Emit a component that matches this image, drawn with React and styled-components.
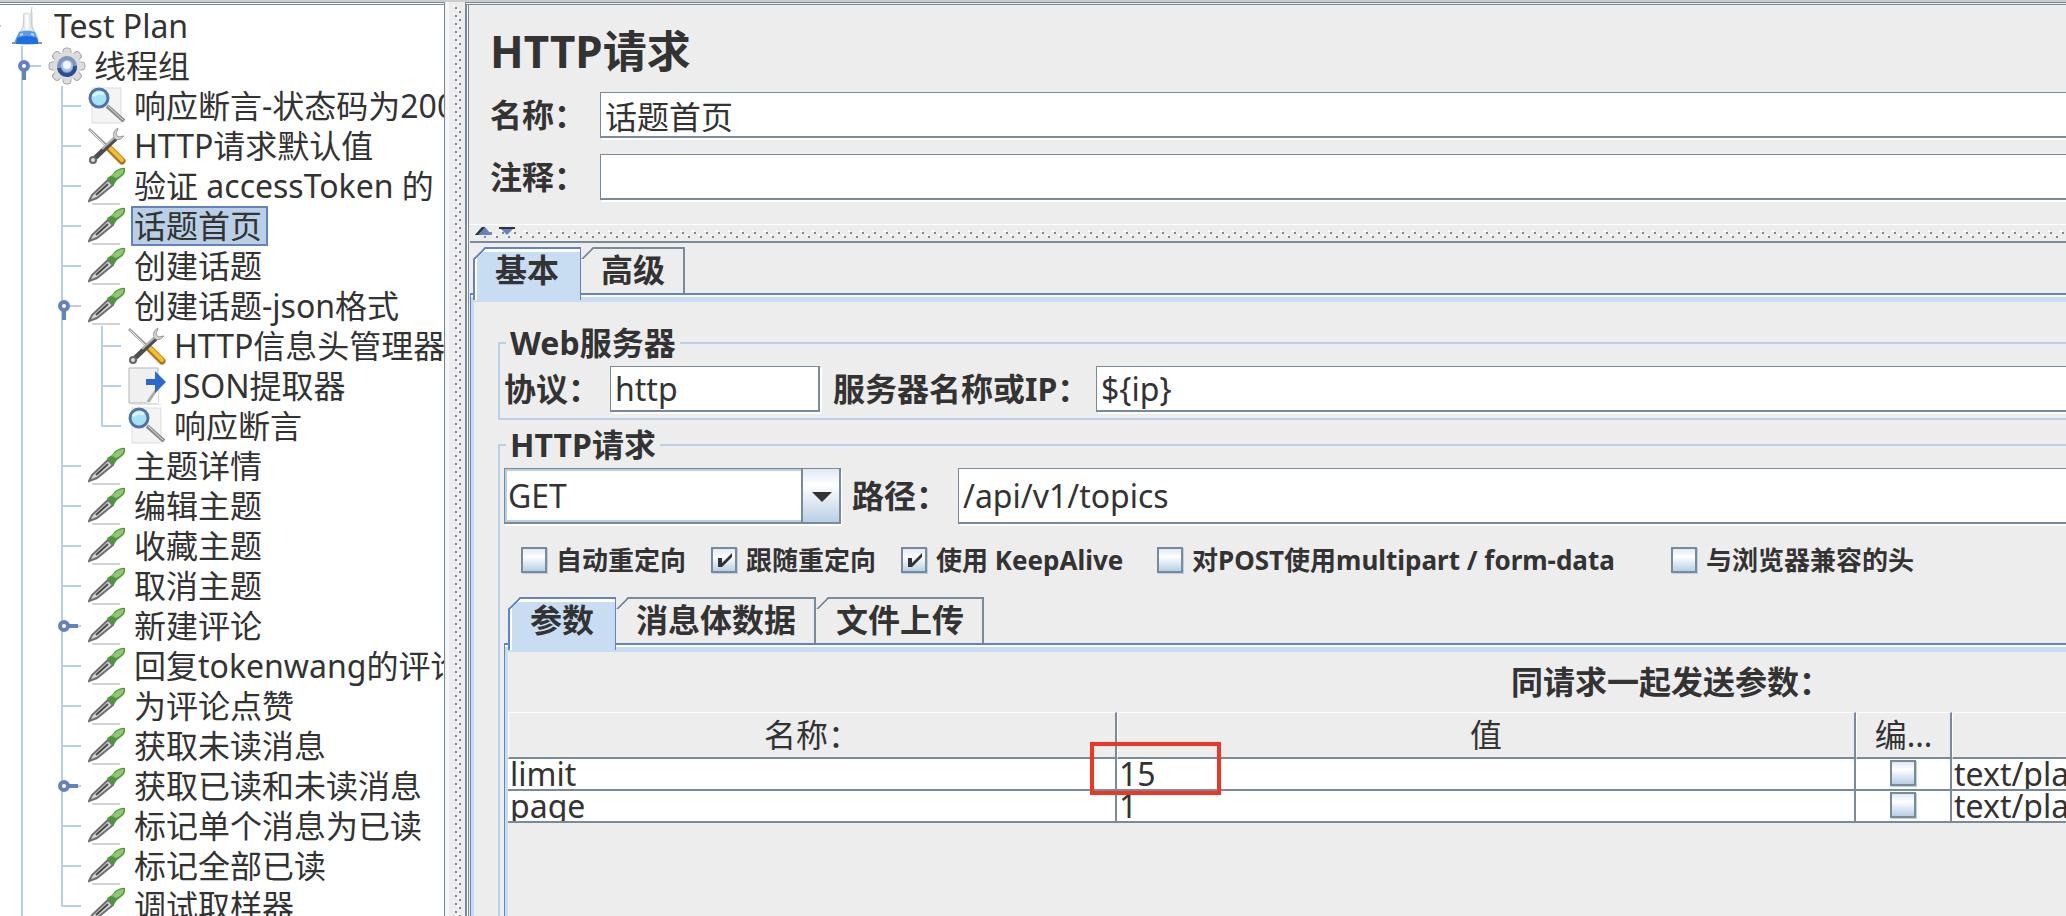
import React, { useState } from 'react'
import styled, { createGlobalStyle } from 'styled-components'

const LINE = '#7a8a99'
const BLUE = '#6382bf'
const PALE = '#b8cfe5'
const TAB = '#c8ddf2'

const GlobalStyle = createGlobalStyle`
* { box-sizing: border-box; }
body {
    margin: 0;
    overflow: hidden;
    background: #ededed;
    color: #333333;
    font: 32px/40px "Noto Sans", "Noto Sans CJK SC", sans-serif;
}
input, select, button { font: inherit; color: inherit; margin: 0; }
input:focus, select:focus { outline: none; }
`

const Window = styled.div`
height: 100vh;
display: grid;
grid-template-columns: 446px 19px minmax(0, 1fr);
border-top: 2px solid #cccccc;
`

const TreePane = styled.nav`
background: #fff;
border-top: 3px double ${LINE};
border-right: 1px solid ${LINE};
margin-right: 1px;
padding-top: 1px;
overflow: hidden;
`

const Splitter = styled.div`
border-left: 3px solid #f7f7f7;
svg { display: block; width: 100%; height: 100%; }
`

const TreeList = styled.ul`
list-style: none;
margin: 0;
padding: 0;
`

const TreeRow = styled.li`
display: flex;
align-items: center;
height: 40px;
padding-left: 2px;
white-space: nowrap;

&:first-child {
    background: linear-gradient(${PALE}, ${PALE}) 0 19px / 1px 2px no-repeat;
}
`

const Guide = styled.svg`
flex: none;
width: 40px;
height: 40px;
`

const NodeIcon = styled.svg`
flex: none;
width: 38px;
height: 38px;
margin: 0 5px 0 6px;
`

const NodeLabel = styled.button`
height: 40px;
padding: 0 4px 0 1px;
border: 2px solid ${props => props.$selected ? BLUE : 'transparent'};
background: ${props => props.$selected ? PALE : 'transparent'};
line-height: 36px;
white-space: nowrap;
`

const Editor = styled.main`
border-left: 2px solid ${LINE};
border-top: 3px double ${LINE};
overflow: hidden;
display: flex;
flex-direction: column;
box-shadow: inset 1px 0 #fff, inset 2px 0 ${LINE};
padding-left: 3px;
`

const Heading = styled.h1`
margin: 18px 0 13px 20px;
font-size: 44px;
line-height: 56px;
`

const Field = styled.div`
display: flex;
align-items: center;
margin: 0 0 16px 20px;
`

const FieldLabel = styled.label`
flex: none;
width: ${props => props.$width}px;
font-weight: bold;
white-space: nowrap;
`

const TextInput = styled.input`
min-width: 0;
padding: 0 4px;
background: #fff;
border: 1px solid ${LINE};
border-bottom-width: 2px;
border-right-width: 2px;
box-shadow: 2px 2px #fff;
flex: ${props => props.$width ? 'none' : '1'};
width: ${props => props.$width ? `${props.$width}px` : 'auto'};
height: ${props => props.$tall ? 56 : 46}px;
margin-right: ${props => props.$width ? 13 : -4}px;
`

const Divider = styled.div`
height: 19px;
margin-top: 8px;
flex: none;
border-top: 1px solid #fff;
border-bottom: 2px solid ${LINE};
svg { display: block; width: 100%; height: 16px; }
`

const TabBar = styled.div`
display: flex;
margin-top: 4px;
padding-left: ${props => props.$inset}px;
`

const TabButton = styled.button`
position: relative;
height: 46px;
padding: 0 ${props => props.$first ? 22 : 20}px;
border: 0;
background: none;
font-weight: bold;
line-height: 38px;
span { position: relative; z-index: 2; }
`

const TabShape = styled.i`
position: absolute;
inset: 0 0 ${props => props.$active ? -7 : 0}px 0;
z-index: ${props => props.$active ? 1 : 0};
border-top: 2px solid ${props => props.$active ? BLUE : LINE};
border-right: ${props => props.$active ? 1 : 2}px solid ${props => props.$active ? BLUE : LINE};
border-left: ${props => props.$active ? `2px solid ${BLUE}` : '0'};
background: ${props => props.$active ? TAB : 'transparent'};
box-shadow: ${props => props.$active ? 'inset 2px 3px #fff' : 'none'};
clip-path: polygon(0 12px, 12px 0, 100% 0, 100% 100%, 0 100%);
&::before {
    content: '';
    position: absolute;
    left: ${props => props.$active ? -2 : 0}px;
    top: -2px;
    width: 12px;
    height: 12px;
    background: linear-gradient(135deg, transparent 49%, ${props => props.$active ? BLUE : LINE} 49% 60%, transparent 60%);
}
`

const TabPanel = styled.section`
flex: 1;
border-left: 1px solid ${BLUE};
border-top: 2px solid ${BLUE};
box-shadow: inset 0 2px #fff, inset 3px 7px ${TAB};
min-height: 0;
padding: ${props => props.$pad};
display: flex;
flex-direction: column;
`

const Group = styled.fieldset`
display: flex;
flex-direction: column;
flex: ${props => props.$grow ? '1' : 'none'};
min-width: 0;
margin: 0 -4px 5px 0;
padding: 3px 0 6px 4px;
border: 2px solid ${PALE};
${props => props.$grow && 'border-bottom: 0; margin-bottom: 0; padding-bottom: 0;'}
`

const Legend = styled.legend`
margin-left: 2px;
padding: 0 4px;
font-weight: bold;
line-height: 40px;
`

const Row = styled.div`
display: flex;
align-items: center;
`

const Combo = styled.div`
display: grid;
flex: none;
width: 337px;
height: 56px;
margin-right: 11px;
border: 1px solid ${LINE};
border-bottom-width: 2px;
border-right-width: 2px;
box-shadow: 1px 2px #fff;
grid-template-columns: 1fr 38px;
select {
    grid-area: 1 / 1 / 2 / 3;
    appearance: none;
    border: 2px solid ${PALE};
    border-radius: 0;
    padding: 0 1px;
    background: #fff;
}
svg { grid-area: 1 / 2; width: 38px; height: 53px; pointer-events: none; z-index: 1; }
`

const Options = styled.div`
display: grid;
grid-template-columns: 190px 190px 256px 514px auto;
padding: 16px 0 13px 17px;
`

const Option = styled.label`
display: flex;
align-items: center;
gap: 9px;
font-size: 26px;
font-weight: bold;
white-space: nowrap;
`

const CheckBox = styled.input`
appearance: none;
display: block;
flex: none;
width: 26px;
height: 26px;
border: 2px solid ${LINE};
box-shadow: 1px 1px ${PALE};
background: linear-gradient(#dfe9f4, #fff 35%, #b8cfe5);
&:checked {
    background: url("data:image/svg+xml,%3Csvg xmlns='http://www.w3.org/2000/svg' viewBox='0 0 22 22'%3E%3Cpath d='M5 9h4v5L19 4v4L9 18H5z' fill='%23333'/%3E%3C/svg%3E"), linear-gradient(#dfe9f4, #fff 35%, #b8cfe5);
}
`

const TableArea = styled.div`
position: relative;
overflow: hidden;
flex: 1;
`

const ParamTable = styled.table`
width: 2326px;
table-layout: fixed;
border-collapse: separate;
border-spacing: 0;
caption { height: 60px; line-height: 60px; font-weight: bold; }
th {
    height: 47px;
    padding: 0;
    font-weight: normal;
    line-height: 44px;
    border-top: 1px solid #fff;
    border-left: 1px solid #fff;
    border-right: 2px solid ${LINE};
    border-bottom: 2px solid ${LINE};
}
td {
    height: 32px;
    padding: 0 2px;
    background: #fff;
    border-right: 2px solid ${LINE};
    border-bottom: 2px solid ${LINE};
}
`

const Cell = styled.div`
height: 30px;
line-height: 30px;
overflow: hidden;
input { margin: 1px auto; }
`

const Highlight = styled.div`
position: absolute;
left: 582px;
top: 90px;
width: 131px;
height: 53px;
border: 4px solid #ee3626;
pointer-events: none;
`

const icons = {
    plan: <>
        <path d="M17 5l6 1V1l2 5v14l7 14H6l9-14z" fill="#e6e9ec" />
        <path d="M16 6l-1 14L8 32M24 0l-1 8 1 12 6 12" stroke="#c3c7cb" />
        <path d="M19 8v18" stroke="#fff" strokeWidth="3" />
        <path d="M11 25q8-3 16 0l4 11q-12 3-25 0z" fill="#5b9dea" />
        <path d="M9 31q10-4 20 0l2 6H8z" fill="#1f6fe0" />
        <path d="M12 28l3-1M23 27l3 1" stroke="#b9dafa" strokeWidth="2" />
        <path d="M4 36h4M30 36h4" stroke="#8c959e" strokeWidth="2" />
    </>,
    gear: <>
        <g fill="#dcdcdc" stroke="#a6a6a6">
            {[0, 45, 90, 135].map(a => <rect key={a} x="15" y="1" width="8" height="36" rx="3" transform={`rotate(${a} 19 19)`} />)}
        </g>
        <circle cx="19" cy="19" r="14" fill="#dcdcdc" />
        <circle cx="19" cy="19" r="8" fill="#a9c0e4" stroke="#7f96bd" strokeWidth="4" />
        <path d="M11 21a8 8 0 0 0 16-2" stroke="#2c4f94" strokeWidth="4" />
        <circle cx="19" cy="18" r="4" fill="#f2f6fb" />
    </>,
    search: <>
        <path d="M4 1h29v35H4z" fill="#f4f4f4" stroke="#dddddd" />
        <path d="M19 19L36 34" stroke="#8b8b8b" strokeWidth="4" />
        <path d="M20 19L35 33" stroke="#dedede" strokeWidth="1" />
        <circle cx="11" cy="11" r="9" fill="#a5e2f8" stroke="#5272a6" strokeWidth="3" />
        <path d="M5 9q5-5 11-2" stroke="#d9f6ff" strokeWidth="3" fill="none" />
    </>,
    tools: <>
        <path d="M1 2l17 16" stroke="#9d9d9d" strokeWidth="3" />
        <path d="M2 3l15 15" stroke="#eee" />
        <path d="M22 22l12 12" stroke="#a87510" strokeWidth="7" strokeLinecap="round" />
        <path d="M22 21l12 12" stroke="#f4bd34" strokeWidth="4" strokeLinecap="round" />
        <path d="M6 32L28 11" stroke="#4c4c4c" strokeWidth="5" />
        <path d="M14 22L28 9" stroke="#b5b5b5" strokeWidth="2" />
        <path d="M30 1q-6 3-4 10 5 4 10-2l-6 1-2-3z" fill="#d5d5d5" stroke="#999" />
        <circle cx="5" cy="33" r="3" fill="#ddd" stroke="#666" strokeWidth="2" />
    </>,
    pipette: <>
        <path d="M4 37h28" stroke="#d2d2d2" strokeWidth="2" />
        <path d="M1 34l3-6L20 13l5 5L9 31z" fill="#d6d6d6" stroke="#6f6f6f" strokeWidth="2" />
        <path d="M8 28L20 17" stroke="#4a4a4a" strokeWidth="2" />
        <path d="M19 11l5-3 3-4q7-4 10-3 1 6-4 9l-4 3-4 6z" fill="#4f9540" />
        <path d="M24 9q5-7 12-7 0 6-8 9z" fill="#8fc96c" />
    </>,
    extract: <>
        <path d="M1 1h29v35H1z" fill="#f0f0f0" stroke="#b5b5b5" />
        <path d="M3 38h30" stroke="#cccccc" strokeWidth="1" />
        <path d="M19 36l11-16v16z" fill="#fff" />
        <path d="M20 35l9-13" stroke="#aaaaaa" strokeWidth="3" />
        <path d="M18 12h9V4l11 11-11 11v-8h-9z" fill="#2c69cf" />
    </>,
}

const nodes = [
    { depth: 0, icon: 'plan', name: 'Test Plan' },
    { depth: 1, icon: 'gear', name: '线程组', handle: 'open' },
    { depth: 2, icon: 'search', name: '响应断言-状态码为200' },
    { depth: 2, icon: 'tools', name: 'HTTP请求默认值' },
    { depth: 2, icon: 'pipette', name: '验证 accessToken 的' },
    { depth: 2, icon: 'pipette', name: '话题首页' },
    { depth: 2, icon: 'pipette', name: '创建话题' },
    { depth: 2, icon: 'pipette', name: '创建话题-json格式', handle: 'open' },
    { depth: 3, icon: 'tools', name: 'HTTP信息头管理器' },
    { depth: 3, icon: 'extract', name: 'JSON提取器' },
    { depth: 3, icon: 'search', name: '响应断言', last: true },
    { depth: 2, icon: 'pipette', name: '主题详情' },
    { depth: 2, icon: 'pipette', name: '编辑主题' },
    { depth: 2, icon: 'pipette', name: '收藏主题' },
    { depth: 2, icon: 'pipette', name: '取消主题' },
    { depth: 2, icon: 'pipette', name: '新建评论', handle: 'closed' },
    { depth: 2, icon: 'pipette', name: '回复tokenwang的评论' },
    { depth: 2, icon: 'pipette', name: '为评论点赞' },
    { depth: 2, icon: 'pipette', name: '获取未读消息' },
    { depth: 2, icon: 'pipette', name: '获取已读和未读消息', handle: 'closed' },
    { depth: 2, icon: 'pipette', name: '标记单个消息为已读' },
    { depth: 2, icon: 'pipette', name: '标记全部已读' },
    { depth: 2, icon: 'pipette', name: '调试取样器', last: true },
]

const params = [
    { name: 'limit', value: '15', type: 'text/plain' },
    { name: 'page', value: '1', type: 'text/plain' },
]

const TreeGuide = ({ branch, handle, last }) => (
    <Guide viewBox="0 0 40 40" aria-hidden="true">
        <path d={last ? 'M20 0v21' : 'M20 0v40'} stroke={PALE} strokeWidth="2" />
        {branch && <path d="M20 20h19" stroke={PALE} strokeWidth="2" />}
        {handle && <>
            <path d={handle === 'open' ? 'M22 24v10' : 'M26 20h10'} stroke={BLUE} strokeWidth="4" />
            <circle cx="22" cy="20" r="4" fill="#fff" stroke={BLUE} strokeWidth="4" />
        </>}
    </Guide>
)

const TreeNode = ({ node, selected, onSelect }) => (
    <TreeRow>
        {Array.from({ length: node.depth }, (_, i) => {
            const own = i === node.depth - 1
            return <TreeGuide key={i} branch={own} handle={own && node.handle} last={own && node.last} />
        })}
        <NodeIcon viewBox="0 0 38 38" fill="none" aria-hidden="true">{icons[node.icon]}</NodeIcon>
        <NodeLabel $selected={selected} onClick={() => onSelect(node.name)}>{node.name}</NodeLabel>
    </TreeRow>
)

const VerticalBumps = () => (
    <svg aria-hidden="true">
        <defs>
            <pattern id="bumps-v" x="4" y="3" width="8" height="8" patternUnits="userSpaceOnUse">
                <path d="M0 0h2v2H0zM4 4h2v2H4z" fill="#fff" />
                <path d="M2 2h2v2H2zM6 6h2v2H6z" fill={LINE} />
            </pattern>
        </defs>
        <rect x="4" y="3" width="8" height="100%" fill="url(#bumps-v)" />
    </svg>
)

const HorizontalBumps = () => (
    <svg aria-hidden="true">
        <defs>
            <pattern id="bumps-h" x="6" y="5" width="12" height="8" patternUnits="userSpaceOnUse">
                <path d="M0 0h2v2H0zM6 4h2v2H6z" fill="#fff" />
                <path d="M2 2h2v2H2zM8 6h2v2H8z" fill={LINE} />
            </pattern>
        </defs>
        <rect x="6" y="5" width="100%" height="8" fill="url(#bumps-h)" />
        <path d="M5 10l7-8h3l7 8z" fill={BLUE} />
        <path d="M5 10l7-8h3l-7 8z" fill="#333" />
        <path d="M29 2h16l-8 8z" fill={BLUE} />
        <path d="M29 2h16v2H29z" fill="#333" />
    </svg>
)

const Tab = ({ children, active, first, onClick }) => (
    <TabButton $first={first} onClick={onClick}>
        <TabShape $active={active} />
        <span>{children}</span>
    </TabButton>
)

const Check = ({ label, defaultChecked }) => (
    <Option>
        <CheckBox type="checkbox" defaultChecked={defaultChecked} />
        {label}
    </Option>
)

const MethodSelect = () => (
    <Combo>
        <select aria-label="方法" defaultValue="GET"><option>GET</option></select>
        <svg viewBox="0 0 38 53" aria-hidden="true">
            <defs>
                <linearGradient id="steel" x2="0" y2="1">
                    <stop stopColor="#dfe9f4" />
                    <stop offset=".3" stopColor="#fff" />
                    <stop offset="1" stopColor="#b8cfe5" />
                </linearGradient>
            </defs>
            <path d="M0 0h38v53H0z" fill="url(#steel)" />
            <path d="M1 0v53" stroke={LINE} strokeWidth="2" />
            <path d="M11 23h20L21 33z" fill="#333" />
        </svg>
    </Combo>
)

const ParamsPanel = () => (
    <TableArea>
        <ParamTable>
            <caption>同请求一起发送参数：</caption>
            <colgroup>
                <col width="609" />
                <col width="739" />
                <col width="96" />
                <col />
            </colgroup>
            <thead>
                <tr><th>名称：</th><th>值</th><th>编...</th><th /></tr>
            </thead>
            <tbody>
                {params.map(p => (
                    <tr key={p.name}>
                        <td><Cell>{p.name}</Cell></td>
                        <td><Cell>{p.value}</Cell></td>
                        <td><Cell><CheckBox type="checkbox" aria-label={`${p.name} 编码`} /></Cell></td>
                        <td><Cell>{p.type}</Cell></td>
                    </tr>
                ))}
            </tbody>
        </ParamTable>
        <Highlight />
    </TableArea>
)

const App = () => {
    const [selected, setSelected] = useState('话题首页')
    const [tab, setTab] = useState('基本')
    const [bodyTab, setBodyTab] = useState('参数')

    return (
        <>
        <GlobalStyle />
        <Window>
            <TreePane>
                <TreeList>
                    {nodes.map((node, i) => <TreeNode key={i} node={node} selected={selected === node.name} onSelect={setSelected} />)}
                </TreeList>
            </TreePane>
            <Splitter><VerticalBumps /></Splitter>
            <Editor>
                <Heading>HTTP请求</Heading>
                <Field>
                    <FieldLabel $width={110} htmlFor="name">名称：</FieldLabel>
                    <TextInput id="name" defaultValue="话题首页" />
                </Field>
                <Field>
                    <FieldLabel $width={110} htmlFor="comment">注释：</FieldLabel>
                    <TextInput id="comment" />
                </Field>
                <Divider><HorizontalBumps /></Divider>
                <TabBar $inset={3}>
                    {['基本', '高级'].map((t, i) => <Tab key={t} first={i === 0} active={tab === t} onClick={() => setTab(t)}>{t}</Tab>)}
                </TabBar>
                <TabPanel $pad="28px 0 0 27px">
                    <Group>
                        <Legend>Web服务器</Legend>
                        <Row>
                            <FieldLabel $width={106} htmlFor="protocol">协议：</FieldLabel>
                            <TextInput id="protocol" $width={210} defaultValue="http" />
                            <FieldLabel $width={263} htmlFor="server">服务器名称或IP：</FieldLabel>
                            <TextInput id="server" defaultValue="${ip}" />
                        </Row>
                    </Group>
                    <Group $grow>
                        <Legend>HTTP请求</Legend>
                        <Row>
                            <MethodSelect />
                            <FieldLabel $width={106} htmlFor="path">路径：</FieldLabel>
                            <TextInput id="path" $tall defaultValue="/api/v1/topics" />
                        </Row>
                        <Options>
                            <Check label="自动重定向" />
                            <Check label="跟随重定向" defaultChecked />
                            <Check label="使用 KeepAlive" defaultChecked />
                            <Check label="对POST使用multipart / form-data" />
                            <Check label="与浏览器兼容的头" />
                        </Options>
                        <TabBar $inset={4}>
                            {['参数', '消息体数据', '文件上传'].map((t, i) => <Tab key={t} first={i === 0} active={bodyTab === t} onClick={() => setBodyTab(t)}>{t}</Tab>)}
                        </TabBar>
                        <TabPanel $pad="7px 0 0 3px">
                            <ParamsPanel />
                        </TabPanel>
                    </Group>
                </TabPanel>
            </Editor>
        </Window>
        </>
    )
}

export default App
